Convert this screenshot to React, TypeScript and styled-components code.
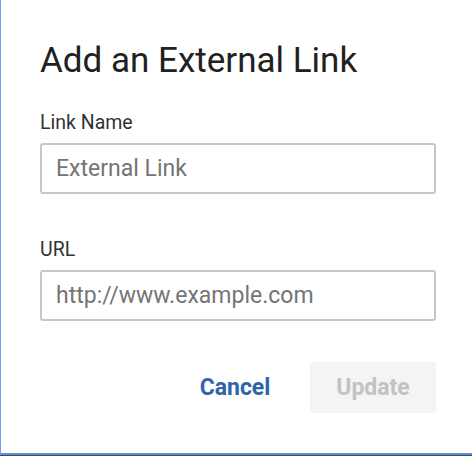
import React, { useState } from 'react';
import styled, { createGlobalStyle } from 'styled-components';

const GlobalStyle = createGlobalStyle`
  html, body {
    margin: 0;
    padding: 0;
    background: #ffffff;
  }
  * {
    box-sizing: border-box;
  }
`;

const Frame = styled.div`
  width: 472px;
  height: 456px;
  background: #4a4a4a;
`;

const Dialog = styled.div`
  display: flex;
  flex-direction: column;
  width: 472px;
  height: 455px;
  padding: 41px 36px 0 39px;
  background: #ffffff;
  border-left: 1px solid #6ea2ee;
  border-bottom: 2px solid #5a8fe0;
  font-family: Roboto, "Liberation Sans", sans-serif;
`;

const Title = styled.h2`
  margin: 0;
  font-size: 35px;
  line-height: 40px;
  font-weight: 400;
  color: #212121;
`;

const Field = styled.div<{ $top: number }>`
  display: flex;
  flex-direction: column;
  gap: 9px;
  margin-top: ${(p) => p.$top}px;
`;

const Label = styled.label`
  font-size: 19.5px;
  line-height: 22px;
  color: #333333;
`;

const Input = styled.input`
  width: 100%;
  height: 51px;
  padding: 0 14px;
  border: 2px solid #c6c6c6;
  border-radius: 3px;
  font-family: Roboto, "Liberation Sans", sans-serif;
  font-size: 23px;
  color: #222222;
  outline: none;

  &::placeholder {
    color: #757575;
  }
`;

const Actions = styled.div`
  display: flex;
  justify-content: flex-end;
  gap: 12px;
  margin-top: 41px;
`;

const Button = styled.button<{ $primary?: boolean }>`
  width: 126px;
  height: 51px;
  border: none;
  border-radius: 3px;
  font-family: Roboto, "Liberation Sans", sans-serif;
  font-size: 23px;
  font-weight: 700;
  background: ${(p) => (p.$primary ? '#f4f4f4' : 'transparent')};
  color: ${(p) => (p.$primary ? '#c2c2c2' : '#2d66a8')};
  cursor: pointer;

  &:disabled {
    cursor: default;
  }
`;

export default function App() {
  const [name, setName] = useState('');
  const [url, setUrl] = useState('');

  return (
    <>
      <GlobalStyle />
      <Frame>
        <Dialog>
          <Title>Add an External Link</Title>
          <Field $top={31}>
            <Label htmlFor="link-name">Link Name</Label>
            <Input
              id="link-name"
              placeholder="External Link"
              value={name}
              onChange={(e) => setName(e.target.value)}
            />
          </Field>
          <Field $top={45}>
            <Label htmlFor="link-url">URL</Label>
            <Input
              id="link-url"
              placeholder="http://www.example.com"
              value={url}
              onChange={(e) => setUrl(e.target.value)}
            />
          </Field>
          <Actions>
            <Button>Cancel</Button>
            <Button $primary disabled={!name || !url}>
              Update
            </Button>
          </Actions>
        </Dialog>
      </Frame>
    </>
  );
}
